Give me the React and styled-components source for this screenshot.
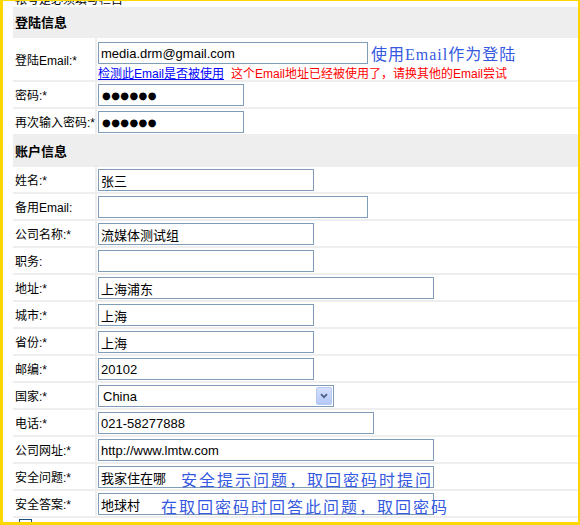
import React from 'react';
import styled, { createGlobalStyle } from 'styled-components';

const GlobalStyle = createGlobalStyle`
    html, body {
        margin: 0;
        padding: 0;
        background: #ffffff;
    }
    body {
        font-family: "Liberation Sans", "Noto Sans CJK SC", sans-serif;
        font-size: 12px;
        color: #000000;
    }
`

const Frame = styled.div`
    width: 580px;
    height: 525px;
    box-sizing: border-box;
    border: 3px solid #fdd800;
    border-top-width: 1px;
    border-right-width: 2px;
    overflow: hidden;
    background: #ffffff;
`

const TopNote = styled.div`
    height: 6px;
    overflow: hidden;
    display: flex;
    align-items: flex-end;
    padding-left: 12px;
    line-height: 14px;
    font-size: 12px;
`

const FormTable = styled.div`
    margin-left: 10px;
    display: grid;
    grid-template-columns: 82px 1fr;
    column-gap: 2px;
    row-gap: 2px;
    background: #eeeeee;
`

const SectionHeader = styled.div`
    grid-column: 1 / span 2;
    height: 29px;
    display: flex;
    align-items: center;
    padding-left: 2px;
    font-size: 13px;
    font-weight: bold;
    background: #eeeeee;
`

const LabelCell = styled.div`
    background: #ffffff;
    display: flex;
    align-items: center;
    padding-left: 2px;
    font-size: 12px;
    white-space: nowrap;
    height: ${props => props.$tall ? '42px' : '25px'};
`

const ValueCell = styled.div`
    background: #ffffff;
    box-sizing: border-box;
    padding: ${props => props.$tall ? '3px 1px 0' : '2px 1px 0'};
    height: ${props => props.$tall ? '42px' : '25px'};
`

const Line = styled.div`
    display: flex;
    align-items: center;
`

const TextInput = styled.input`
    box-sizing: border-box;
    width: ${props => props.$width}px;
    height: 22px;
    margin: 0;
    padding: 0 2px;
    border: 1px solid #7f9db9;
    background: #ffffff;
    font-family: "Liberation Sans", "Noto Sans CJK SC", sans-serif;
    font-size: 13px;
    color: #000000;
    outline: none;
`

const PasswordInput = styled(TextInput)`
    font-family: "DejaVu Sans", sans-serif;
    font-size: 10px;
    padding-left: 3px;
    letter-spacing: 0.4px;
`

const Hint = styled.span`
    font-family: "Liberation Serif", "Noto Sans CJK SC", serif;
    font-size: 16px;
    letter-spacing: ${props => props.$tight ? '1px' : '2px'};
    color: #3559e0;
    white-space: nowrap;
    margin-left: 3px;
`

const OverlayWrap = styled.div`
    position: relative;
    width: ${props => props.$width}px;
`

const OverlayHint = styled(Hint)`
    position: absolute;
    top: 1px;
    left: ${props => props.$left}px;
    margin: 0;
    pointer-events: none;
`

const CheckLine = styled.div`
    display: flex;
    align-items: center;
    gap: 7px;
    height: 14px;
    white-space: nowrap;
`

const CheckLink = styled.a`
    color: #0000ff;
    text-decoration: underline;
    font-size: 12px;
`

const ErrorText = styled.span`
    color: #ff0000;
    font-size: 12px;
`

const FakeSelect = styled.div`
    box-sizing: border-box;
    width: ${props => props.$width}px;
    height: 22px;
    border: 1px solid #7f9db9;
    display: flex;
    align-items: center;
    justify-content: space-between;
    padding: 0 1px 0 4px;
    font-size: 13px;
`

const SelectButton = styled.span`
    box-sizing: border-box;
    width: 16px;
    height: 18px;
    border: 1px solid #b7c9f3;
    border-radius: 2px;
    background: linear-gradient(#d3e0fd, #b6c9f7);
    display: flex;
    align-items: center;
    justify-content: center;
`

const FullRow = styled.div`
    grid-column: 1 / span 2;
    background: #ffffff;
    height: 25px;
    padding: 1px 6px 0;
`

const Checkbox = styled.span`
    display: block;
    width: 13px;
    height: 13px;
    box-sizing: border-box;
    border: 1px solid #1c5180;
    background: #ffffff;
`

const accountFields = [
    { label: '姓名:*', value: '张三', width: 216 },
    { label: '备用Email:', value: '', width: 270 },
    { label: '公司名称:*', value: '流媒体测试组', width: 216 },
    { label: '职务:', value: '', width: 216 },
    { label: '地址:*', value: '上海浦东', width: 336 },
    { label: '城市:*', value: '上海', width: 216 },
    { label: '省份:*', value: '上海', width: 216 },
    { label: '邮编:*', value: '20102', width: 216 },
    { label: '国家:*', select: 'China', width: 236 },
    { label: '电话:*', value: '021-58277888', width: 276 },
    { label: '公司网址:*', value: 'http://www.lmtw.com', width: 336 },
    { label: '安全问题:*', value: '我家住在哪', width: 336, hint: '安全提示问题，取回密码时提问', hintLeft: 83 },
    { label: '安全答案:*', value: '地球村', width: 336, hint: '在取回密码时回答此问题，取回密码', hintLeft: 63 },
]

function Chevron() {
    return (
        <svg width="8" height="6" viewBox="0 0 8 6">
            <path d="M1 1.2 L4 4.2 L7 1.2" fill="none" stroke="#4d6185" strokeWidth="1.8" />
        </svg>
    )
}

function FieldValue({ field }) {
    if (field.select) {
        return (
            <FakeSelect $width={field.width}>
                <span>{field.select}</span>
                <SelectButton><Chevron /></SelectButton>
            </FakeSelect>
        )
    }
    if (field.hint) {
        return (
            <OverlayWrap $width={field.width}>
                <TextInput $width={field.width} defaultValue={field.value} />
                <OverlayHint $left={field.hintLeft}>{field.hint}</OverlayHint>
            </OverlayWrap>
        )
    }
    return <TextInput $width={field.width} defaultValue={field.value} />
}

function App() {
    return (
        <>
            <GlobalStyle />
            <Frame>
                <TopNote>帐号是必须填写栏目</TopNote>
                <FormTable>
                    <SectionHeader>登陆信息</SectionHeader>

                    <LabelCell $tall>登陆Email:*</LabelCell>
                    <ValueCell $tall>
                        <Line>
                            <TextInput $width={270} defaultValue="media.drm@gmail.com" />
                            <Hint $tight>使用Email作为登陆</Hint>
                        </Line>
                        <CheckLine>
                            <CheckLink href="#">检测此Email是否被使用</CheckLink>
                            <ErrorText>这个Email地址已经被使用了，请换其他的Email尝试</ErrorText>
                        </CheckLine>
                    </ValueCell>

                    <LabelCell>密码:*</LabelCell>
                    <ValueCell>
                        <PasswordInput $width={146} defaultValue="●●●●●●" />
                    </ValueCell>

                    <LabelCell>再次输入密码:*</LabelCell>
                    <ValueCell>
                        <PasswordInput $width={146} defaultValue="●●●●●●" />
                    </ValueCell>

                    <SectionHeader>账户信息</SectionHeader>

                    {accountFields.map(field => (
                        <React.Fragment key={field.label}>
                            <LabelCell>{field.label}</LabelCell>
                            <ValueCell><FieldValue field={field} /></ValueCell>
                        </React.Fragment>
                    ))}

                    <FullRow><Checkbox /></FullRow>
                </FormTable>
            </Frame>
        </>
    )
}

export default App;
